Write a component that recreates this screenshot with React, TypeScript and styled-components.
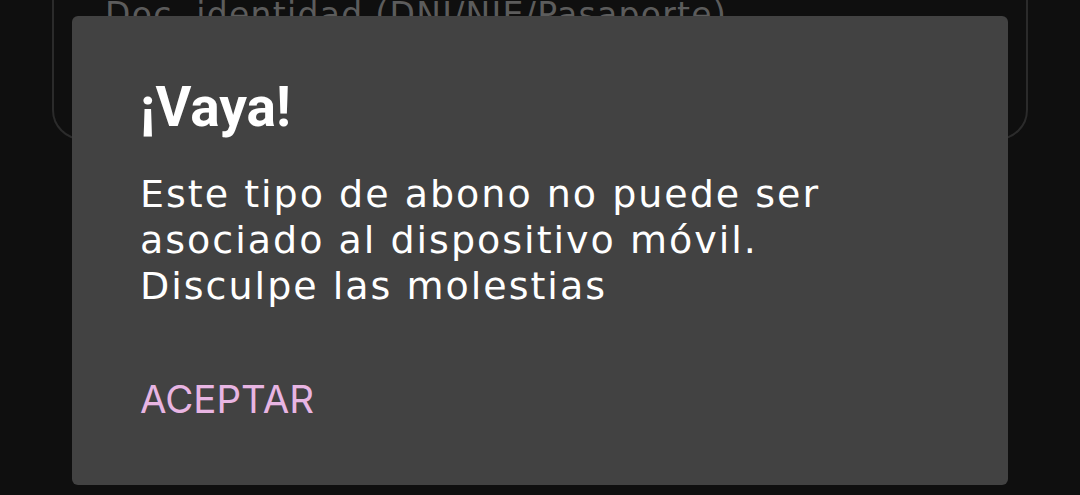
import React from 'react';
import styled, { createGlobalStyle } from 'styled-components';

const GlobalStyle = createGlobalStyle`
  html, body {
    margin: 0;
    padding: 0;
    background: #0f0f0f;
    font-family: "DejaVu Sans", Inter, sans-serif;
    overflow: hidden;
  }
`;

const Page = styled.div`
  width: 1080px;
  height: 495px;
  position: relative;
  background: #0f0f0f;
  overflow: hidden;
`;

const Form = styled.div`
  display: flex;
  flex-direction: column;
  padding: 0 52px;
  margin-top: -40px;
`;

const Field = styled.div`
  height: 180px;
  box-sizing: border-box;
  border: 2px solid #2b2b2b;
  border-radius: 30px;
  padding: 33px 0 0 51px;
`;

const FieldLabel = styled.span`
  font-size: 33px;
  line-height: 1.2;
  letter-spacing: 1.3px;
  color: #5c5c5c;
`;

const Dialog = styled.div`
  position: absolute;
  left: 72px;
  top: 16px;
  width: 936px;
  height: 469px;
  box-sizing: border-box;
  background: #424242;
  border-radius: 6px;
  padding: 64px 68px 0;
  display: flex;
  flex-direction: column;
  align-items: flex-start;
`;

const Title = styled.h2`
  margin: 0;
  font-family: Roboto, "Liberation Sans", sans-serif;
  font-size: 55px;
  line-height: 1;
  font-weight: 700;
  color: #ffffff;
`;

const Message = styled.p`
  margin: 36px 0 0;
  font-size: 38px;
  line-height: 46px;
  font-weight: 400;
  letter-spacing: 2px;
  color: #ffffff;
`;

const Action = styled.button`
  margin: 71px 0 0;
  padding: 0;
  border: none;
  background: none;
  font-family: Inter, Roboto, sans-serif;
  font-size: 38.5px;
  line-height: 1;
  color: #e8b5e3;
  cursor: pointer;
`;

export default function App() {
  return (
    <Page>
      <GlobalStyle />
      <Form>
        <Field>
          <FieldLabel>Doc. identidad (DNI/NIE/Pasaporte)</FieldLabel>
        </Field>
      </Form>
      <Dialog role="dialog">
        <Title>¡Vaya!</Title>
        <Message>
          Este tipo de abono no puede ser
          <br />
          asociado al dispositivo móvil.
          <br />
          Disculpe las molestias
        </Message>
        <Action>ACEPTAR</Action>
      </Dialog>
    </Page>
  );
}
